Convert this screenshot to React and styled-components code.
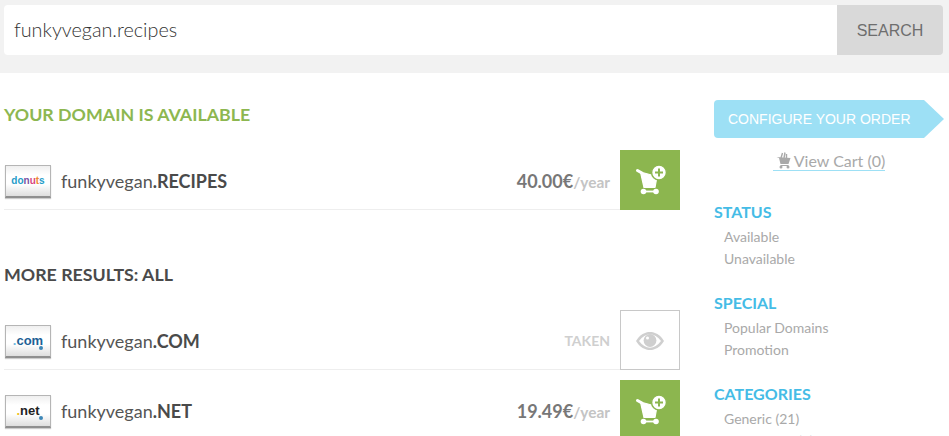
import styled, { createGlobalStyle } from "styled-components";

const GlobalStyle = createGlobalStyle`
  html, body {
    margin: 0;
    padding: 0;
    height: 436px;
    overflow: hidden;
    background: #fff;
    font-family: Lato, "Liberation Sans", sans-serif;
  }
`;

const CartPlusIcon = () => (
  <svg width="60" height="60" viewBox="0 0 60 60">
    <path d="M17.5 20.5 L21 22.5" stroke="#fff" strokeWidth="3" strokeLinecap="round" />
    <path d="M20.5 22 L37 26.5 L35 37.5 H24 Z" fill="#fff" stroke="#fff" strokeWidth="1.2" strokeLinejoin="round" />
    <path d="M23.5 41.5 H36" stroke="#fff" strokeWidth="1.8" />
    <circle cx="23.5" cy="41.5" r="2.8" fill="#fff" />
    <circle cx="36" cy="41.5" r="2.8" fill="#fff" />
    <circle cx="39" cy="22.5" r="7.4" fill="#fff" stroke="#8cb64f" strokeWidth="1.4" />
    <path d="M39 18.5 V26.5 M35 22.5 H43" stroke="#8cb64f" strokeWidth="2" />
  </svg>
);

const EyeIcon = () => (
  <svg width="30" height="20" viewBox="0 0 30 20">
    <path d="M1 10 C5 3.5 10 1 15 1 C20 1 25 3.5 29 10 C25 16.5 20 19 15 19 C10 19 5 16.5 1 10 Z" fill="#cfcfcf" />
    <path d="M4 10 C7.5 5.5 11 3.2 15 3.2 C19 3.2 22.5 5.5 26 10 C22.5 14.5 19 16.8 15 16.8 C11 16.8 7.5 14.5 4 10 Z" fill="#fff" />
    <circle cx="15" cy="9.5" r="6.4" fill="#cfcfcf" />
    <circle cx="12.5" cy="7" r="1.5" fill="#fff" />
  </svg>
);

const SmallCartIcon = () => (
  <svg width="15" height="17" viewBox="0 0 15 17">
    <path d="M0.5 5 L3 6 L4.5 12 H12.5 L14.5 6 Z" fill="#a9a9a9" />
    <path d="M5 6 L6.5 1 M8 6 L9 0.5 M10.5 6 L10.5 2" stroke="#a9a9a9" strokeWidth="1.4" />
    <path d="M4.5 13.5 H12.5" stroke="#a9a9a9" strokeWidth="1" />
    <circle cx="5" cy="15" r="1.5" fill="#a9a9a9" />
    <circle cx="12" cy="15" r="1.5" fill="#a9a9a9" />
  </svg>
);

const Page = styled.div`
  width: 949px;
  height: 436px;
  overflow: hidden;
`;

const SearchBar = styled.div`
  height: 73px;
  background: #f2f2f2;
  padding: 5px 6px 0 4px;
  box-sizing: border-box;
  display: flex;
  align-items: flex-start;
`;

const SearchInput = styled.input`
  flex: 1;
  height: 50px;
  border: none;
  outline: none;
  background: #fff;
  border-radius: 4px 0 0 4px;
  padding: 0 10px 2px;
  box-sizing: border-box;
  font-family: inherit;
  font-size: 19.8px;
  font-weight: 300;
  color: #333;
`;

const SearchButton = styled.button`
  width: 106px;
  height: 50px;
  border: none;
  background: #d9d9d9;
  border-radius: 0 4px 4px 0;
  font-family: "Liberation Sans", sans-serif;
  font-size: 16px;
  color: #6e6e6e;
  padding: 2px 0 0;
`;

const Columns = styled.div`
  display: flex;
  padding-left: 4px;
`;

const Main = styled.main`
  width: 676px;
  flex-shrink: 0;
`;

const AvailableTitle = styled.h2`
  margin: 0;
  padding-top: 29px;
  height: 48px;
  font-size: 17.8px;
  line-height: 24px;
  font-weight: 700;
  color: #8db750;
`;

const ResultsTitle = styled.h2`
  margin: 0;
  padding-top: 52px;
  height: 48px;
  font-size: 17.8px;
  line-height: 24px;
  font-weight: 700;
  color: #4a4a4a;
`;

const Row = styled.div`
  display: flex;
  align-items: center;
  height: 60px;
  box-sizing: border-box;
  border-bottom: 1px solid #eeeeee;
  margin-bottom: ${(p) => p.$gap || 0}px;
`;

const Logo = styled.div`
  position: relative;
  width: 46px;
  height: 33px;
  margin: 3px 0 0 1px;
  box-sizing: border-box;
  border: 1px solid #b5b5b5;
  border-bottom: 2px solid #8f8f8f;
  box-shadow: 0 1px 1px rgba(0, 0, 0, 0.2);
  background: linear-gradient(#efefef, #fff 30%, #fff 60%, #dedede);
  display: flex;
  align-items: center;
  justify-content: center;
  font-family: "Liberation Sans", sans-serif;
  font-weight: 700;
  font-size: ${(p) => p.$size}px;
  color: ${(p) => p.$color};
`;

const LogoMark = styled.span`
  color: ${(p) => p.$color};
`;

const RegistryDot = styled.span`
  position: absolute;
  right: 7px;
  bottom: 6px;
  width: 4px;
  height: 4px;
  border-radius: 50%;
  background: #3d87b8;
`;

const DomainName = styled.div`
  margin-left: 10px;
  padding-top: 2px;
  flex: 1;
  font-size: 18px;
  color: #555;

  b {
    font-weight: 700;
    color: #4a4a4a;
  }
`;

const Price = styled.div`
  padding-top: 2px;
  font-size: 18px;
  font-weight: 700;
  color: #777;
  margin-right: 10px;

  span {
    font-size: 15.4px;
    color: #c4c4c4;
  }
`;

const Taken = styled.div`
  padding-top: 2px;
  font-size: 14px;
  font-weight: 700;
  color: #cfcfcf;
  margin-right: 10px;
`;

const AddButton = styled.button`
  width: 60px;
  height: 60px;
  border: none;
  padding: 0;
  background: #8cb64f;
  display: flex;
`;

const ViewButton = styled.button`
  width: 60px;
  height: 60px;
  box-sizing: border-box;
  border: 1px solid #c8c8c8;
  padding: 2px 0 0;
  background: #fff;
  display: flex;
  align-items: center;
  justify-content: center;
`;

const Sidebar = styled.aside`
  margin-left: 34px;
  width: 230px;
  padding-top: 27px;
`;

const ConfigureButton = styled.div`
  width: 230px;
  height: 38px;
  box-sizing: border-box;
  background: #9de0f5;
  border-radius: 4px 0 0 4px;
  clip-path: polygon(0 0, 210px 0, 230px 19px, 210px 38px, 0 38px);
  color: #fff;
  font-family: "Liberation Sans", sans-serif;
  font-size: 14px;
  line-height: 38px;
  padding-left: 14px;
`;

const CartWrap = styled.div`
  width: 230px;
  display: flex;
  justify-content: center;
  margin-top: 13px;
`;

const CartLink = styled.a`
  display: flex;
  align-items: center;
  gap: 3px;
  padding-left: 3px;
  height: 19px;
  border-bottom: 1px solid #9de0f5;
  font-size: 16px;
  color: #a9a9a9;
`;

const FilterGroup = styled.div`
  margin-top: ${(p) => p.$top}px;
`;

const FilterTitle = styled.h3`
  margin: 0 0 4px;
  font-size: 16px;
  line-height: 20px;
  font-weight: 700;
  color: #45bce6;
`;

const FilterItem = styled.div`
  margin-left: 10px;
  font-size: 14px;
  line-height: 22px;
  color: #a9a9a9;
`;

export default function App() {
  return (
    <Page>
      <GlobalStyle />
      <SearchBar>
        <SearchInput defaultValue="funkyvegan.recipes" />
        <SearchButton>SEARCH</SearchButton>
      </SearchBar>
      <Columns>
        <Main>
          <AvailableTitle>YOUR DOMAIN IS AVAILABLE</AvailableTitle>
          <Row>
            <Logo $size={10}>
              <LogoMark $color="#1f9cc9">do</LogoMark>
              <LogoMark $color="#7a4fa3">n</LogoMark>
              <LogoMark $color="#d9477f">u</LogoMark>
              <LogoMark $color="#ef8a2e">t</LogoMark>
              <LogoMark $color="#1f9cc9">s</LogoMark>
            </Logo>
            <DomainName>funkyvegan<b>.RECIPES</b></DomainName>
            <Price>40.00€<span>/year</span></Price>
            <AddButton><CartPlusIcon /></AddButton>
          </Row>
          <ResultsTitle>MORE RESULTS: ALL</ResultsTitle>
          <Row $gap={10}>
            <Logo $size={13} $color="#1d5f95">
              <LogoMark $color="#6fb7e0">.</LogoMark>com
              <RegistryDot />
            </Logo>
            <DomainName>funkyvegan<b>.COM</b></DomainName>
            <Taken>TAKEN</Taken>
            <ViewButton><EyeIcon /></ViewButton>
          </Row>
          <Row>
            <Logo $size={13} $color="#222">
              <LogoMark $color="#f0c020">.</LogoMark>net
              <RegistryDot />
            </Logo>
            <DomainName>funkyvegan<b>.NET</b></DomainName>
            <Price>19.49€<span>/year</span></Price>
            <AddButton><CartPlusIcon /></AddButton>
          </Row>
        </Main>
        <Sidebar>
          <ConfigureButton>CONFIGURE YOUR ORDER</ConfigureButton>
          <CartWrap>
            <CartLink><SmallCartIcon />View Cart (0)</CartLink>
          </CartWrap>
          <FilterGroup $top={31}>
            <FilterTitle>STATUS</FilterTitle>
            <FilterItem>Available</FilterItem>
            <FilterItem>Unavailable</FilterItem>
          </FilterGroup>
          <FilterGroup $top={23}>
            <FilterTitle>SPECIAL</FilterTitle>
            <FilterItem>Popular Domains</FilterItem>
            <FilterItem>Promotion</FilterItem>
          </FilterGroup>
          <FilterGroup $top={23}>
            <FilterTitle>CATEGORIES</FilterTitle>
            <FilterItem>Generic (21)</FilterItem>
            <FilterItem>Geographic (4)</FilterItem>
          </FilterGroup>
        </Sidebar>
      </Columns>
    </Page>
  );
}
